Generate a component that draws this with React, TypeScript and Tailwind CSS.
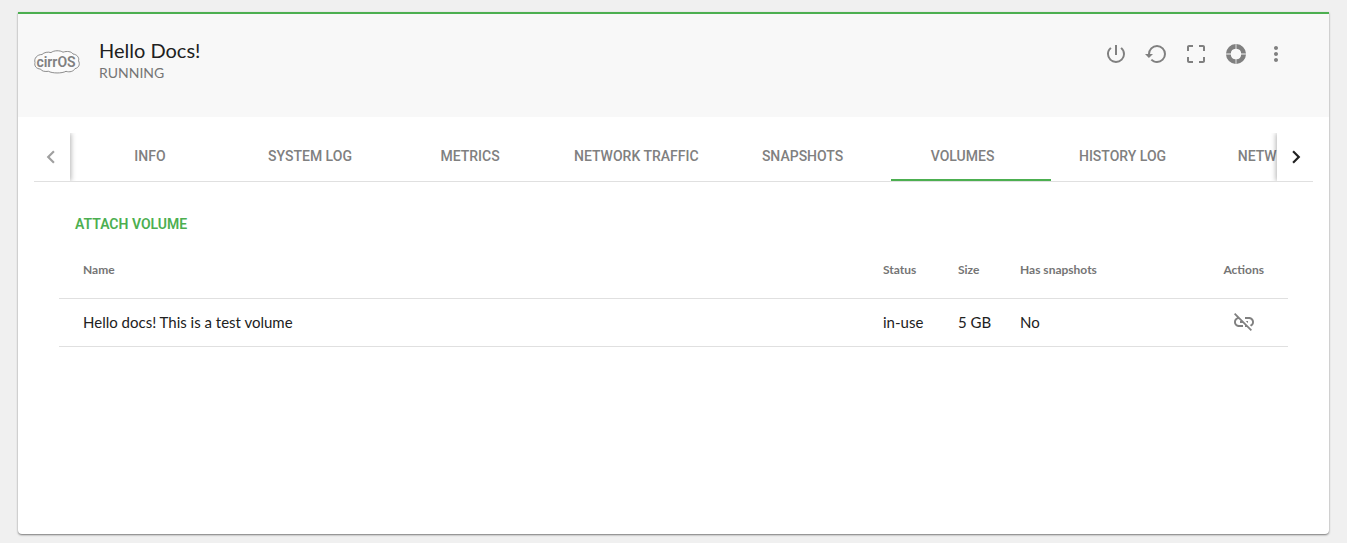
import { useState } from "react";
import { MdChevronLeft, MdChevronRight, MdCropFree, MdLinkOff, MdMoreVert, MdPowerSettingsNew } from "react-icons/md";

const tabs = [
  "Info",
  "System log",
  "Metrics",
  "Network traffic",
  "Snapshots",
  "Volumes",
  "History log",
  "Networking",
];

const volumes = [
  { name: "Hello docs! This is a test volume", status: "in-use", size: "5 GB", hasSnapshots: false },
];

const CirrosLogo = () => (
  <svg viewBox="0 -2 48 26" className="w-12 h-[26px] shrink-0" role="img" aria-label="cirrOS">
    <path
      d="M9 4.500C11 2.300 15 1.600 18 2.600C21 .2 27 .2 30 2.200C34 .8 38.500 1.500 40 4C44 4.500 46.500 7.500 45.500 10.800C47.500 14.500 45.500 18 42 18.600C40.500 21.500 36.500 22.500 33 21.300C29 23.600 19 23.400 15.500 21.300C12 21.800 8.500 21.300 7.500 19C3.500 19 1 16 2 12.500C.8 8.500 4 4.500 9 4.500Z"
      fill="#fbfbfb"
      stroke="#808080"
      strokeWidth="0.9"
    />
    <text x="23" y="17" textAnchor="middle" fill="#808080" className="font-['Roboto'] font-semibold text-[14px]">
      cirrOS
    </text>
  </svg>
);

const RestoreIcon = () => (
  <svg viewBox="0 0 24 24" width={24} height={24} fill="currentColor">
    <path d="M13 3A9 9 0 0 0 4 12H1L4.890 15.890L4.960 16.030L9 12H6A7 7 0 0 1 13 5A7 7 0 0 1 20 12A7 7 0 0 1 13 19C11.070 19 9.320 18.210 8.060 16.940L6.640 18.360C8.270 20 10.500 21 13 21A9 9 0 0 0 22 12A9 9 0 0 0 13 3Z" />
  </svg>
);

const RescueIcon = () => (
  <svg viewBox="0 0 24 24" width={24} height={24} fill="currentColor">
    <path d="M12.400 2A10 10 0 0 1 22 11.600H17.200A5.200 5.200 0 0 0 12.400 6.800ZM22 12.400A10 10 0 0 1 12.400 22V17.200A5.200 5.200 0 0 0 17.200 12.400ZM11.600 22A10 10 0 0 1 2 12.400H6.800A5.200 5.200 0 0 0 11.600 17.200ZM2 11.600A10 10 0 0 1 11.600 2V6.800A5.200 5.200 0 0 0 6.800 11.600Z" />
  </svg>
);

const actions = [
  { label: "Power", icon: <MdPowerSettingsNew size={24} /> },
  { label: "Restart", icon: <RestoreIcon /> },
  { label: "Console", icon: <MdCropFree size={24} /> },
  { label: "Rescue", icon: <RescueIcon /> },
  { label: "More", icon: <MdMoreVert size={24} /> },
];

const InstanceHeader = () => (
  <header className="flex items-start justify-between bg-[#f8f8f8] h-[103px] pt-5 pl-[15px] pr-[33px]">
    <div className="flex items-center gap-[18px] pt-1">
      <CirrosLogo />
      <div>
        <h1 className="text-xl leading-6 text-[#212121]">Hello Docs!</h1>
        <p className="text-sm leading-[22px] text-[#757575]">RUNNING</p>
      </div>
    </div>
    <div className="flex text-[#808080]">
      {actions.map((action) => (
        <button key={action.label} type="button" aria-label={action.label} className="px-2 h-10 w-10">
          {action.icon}
        </button>
      ))}
    </div>
  </header>
);

const TabBar = () => {
  const [active, setActive] = useState("Volumes");

  return (
    <nav className="flex mx-4 mt-4 h-[49px] border-b border-[#e0e0e0]">
      <button type="button" aria-label="Previous tabs" className="z-10 w-9 shrink-0 flex items-center pl-1 text-[#a0a0a0] shadow-[1px_0_5px_rgba(0,0,0,0.3)] [clip-path:inset(0_-8px_0_0)]">
        <MdChevronLeft size={26} />
      </button>
      <div className="flex flex-1 min-w-0 overflow-hidden">
        {tabs.map((tab) => (
          <button
            key={tab}
            type="button"
            onClick={() => setActive(tab)}
            className="relative min-w-40 shrink-0 px-6 pb-0.5 font-['Roboto'] text-sm font-medium uppercase text-[#808080]"
          >
            {tab}
            {active === tab && <span className="absolute left-2 bottom-0 h-0.5 w-full bg-[#4caf50]" />}
          </button>
        ))}
      </div>
      <button type="button" aria-label="Next tabs" className="z-10 w-9 shrink-0 flex items-center pl-[6px] text-[#212121] shadow-[-1px_0_5px_rgba(0,0,0,0.3)] [clip-path:inset(0_0_0_-8px)]">
        <MdChevronRight size={26} />
      </button>
    </nav>
  );
};

const VolumeTable = () => (
  <table className="w-full text-left text-[#212121]">
    <thead>
      <tr className="h-14 border-b border-[#e0e0e0] text-xs text-[#757575]">
        <th className="pl-6 font-bold">Name</th>
        <th className="w-[75px] font-bold">Status</th>
        <th className="w-[62px] font-bold">Size</th>
        <th className="w-[180px] font-bold">Has snapshots</th>
        <th className="w-[88px] pr-6 text-right font-bold">Actions</th>
      </tr>
    </thead>
    <tbody>
      {volumes.map((volume) => (
        <tr key={volume.name} className="h-12 border-b border-[#e0e0e0] text-[15px]">
          <td className="pl-6">{volume.name}</td>
          <td>{volume.status}</td>
          <td>{volume.size}</td>
          <td>{volume.hasSnapshots ? "Yes" : "No"}</td>
          <td className="pr-8">
            <button type="button" aria-label="Detach volume" className="ml-auto block text-[#808080]">
              <MdLinkOff size={24} />
            </button>
          </td>
        </tr>
      ))}
    </tbody>
  </table>
);

const App = () => {
  return (
    <div className="flex min-h-screen flex-col bg-[#f0f0f0] px-[18px] pt-3 pb-[9px] font-['Lato',sans-serif]">
      <main className="flex-1 overflow-hidden rounded-b border-t-2 border-[#4caf50] bg-white shadow-[0_1px_2px_rgba(0,0,0,0.5)]">
        <InstanceHeader />
        <TabBar />
        <section className="mx-[41px] mt-6">
          <button type="button" className="px-4 h-9 font-['Roboto'] text-sm font-semibold uppercase text-[#4caf50]">
            Attach volume
          </button>
          <VolumeTable />
        </section>
      </main>
    </div>
  );
};

export default App;
